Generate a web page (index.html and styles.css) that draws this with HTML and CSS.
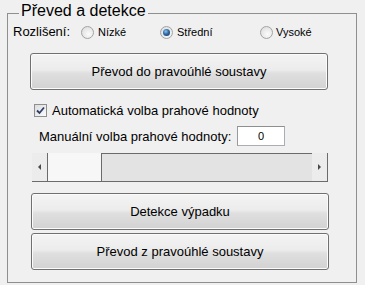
FILE: index.html
```html
<!DOCTYPE html>
<html lang="cs">
<head>
    <meta charset="UTF-8">
    <title>Převed a detekce</title>
    <link rel="stylesheet" href="styles.css">
</head>
<body>
    <div class="panel">
        <span class="panel-title">Převed a detekce</span>

        <div class="res-row">
            <span class="res-label">Rozlišení:</span>
            <label class="radio radio-low"><span class="radio-dot"></span>Nízké</label>
            <label class="radio radio-mid"><span class="radio-dot checked"></span>Střední</label>
            <label class="radio radio-high"><span class="radio-dot"></span>Vysoké</label>
        </div>

        <button class="btn btn-first">Převod do pravoúhlé soustavy</button>

        <label class="check-row">
            <span class="checkbox">
                <svg width="9" height="9" viewBox="0 0 9 9"><path d="M1 4.5 L3.5 7 L8 1.5" fill="none" stroke="#2b3f6b" stroke-width="1.8"/></svg>
            </span>
            Automatická volba prahové hodnoty
        </label>

        <div class="manual-row">
            <span class="manual-label">Manuální volba prahové hodnoty:</span>
            <span class="edit">0</span>
        </div>

        <div class="slider">
            <span class="slider-arrow left"><span class="tri-left"></span></span>
            <span class="slider-thumb"></span>
            <span class="slider-track"></span>
            <span class="slider-arrow right"><span class="tri-right"></span></span>
        </div>

        <button class="btn btn-second">Detekce výpadku</button>
        <button class="btn btn-third">Převod z pravoúhlé soustavy</button>
    </div>
</body>
</html>
```

FILE: styles.css
```css
:root {
    --bg-color: #f0f0f0;
    --frame-color: #8f8f8f;
    --dark-line: #6b6b6b;
    --text-color: #000000;
    --font-family: 'Liberation Sans', Arial, sans-serif;
}

body {
    margin: 0;
    padding: 13px 0 0 7px;
    background: var(--bg-color);
    color: var(--text-color);
    font-family: var(--font-family);
    font-size: 13px;
    width: 365px;
    height: 285px;
    box-sizing: border-box;
    overflow: hidden;
}

.panel {
    position: relative;
    width: 350px;
    height: 270px;
    border: 1px solid var(--frame-color);
    box-sizing: border-box;
    padding-top: 10px;
    display: flex;
    flex-direction: column;
    align-items: flex-start;
}

.panel-title {
    position: absolute;
    top: -12px;
    left: 11px;
    padding: 0 2px;
    background: var(--bg-color);
    font-size: 16px;
    line-height: 18px;
}

/* Fila de resolucion */
.res-row {
    display: flex;
    align-items: center;
    height: 16px;
    padding-left: 5px;
}

.res-label {
    width: 68px;
    line-height: 16px;
}

.radio {
    display: flex;
    align-items: center;
    font-size: 11px;
}

.radio-low {
    width: 79px;
}

.radio-mid {
    width: 100px;
}

.radio-dot {
    width: 13px;
    height: 13px;
    box-sizing: border-box;
    border-radius: 50%;
    border: 1px solid #a3a3a3;
    background: radial-gradient(circle at 60% 65%, #fbfbfb 0%, #e3e3e3 70%, #d4d4d4 100%);
    margin-right: 4px;
    display: flex;
    align-items: center;
    justify-content: center;
}

.radio-high .radio-dot {
    margin-right: 3px;
}

.radio-dot.checked::after {
    content: "";
    width: 7px;
    height: 7px;
    border-radius: 50%;
    background: radial-gradient(circle at 40% 35%, #8fc2ee 0%, #2f6aa6 45%, #0d2c55 100%);
}

/* Botones */
.btn {
    width: 298px;
    height: 37px;
    border: 1px solid #707070;
    border-radius: 3px;
    background: linear-gradient(#f4f4f4 0%, #ececec 45%, #dfdfdf 55%, #d2d2d2 100%);
    box-shadow: inset 0 0 0 1px #fbfbfb;
    font-family: var(--font-family);
    font-size: 13px;
    color: var(--text-color);
    padding: 0;
}

.btn-first {
    margin: 13px 0 0 22px;
}

.btn-second {
    margin: 11px 0 0 23px;
}

.btn-third {
    margin: 3px 0 0 23px;
}

/* Casilla */
.check-row {
    display: flex;
    align-items: center;
    height: 16px;
    margin: 12px 0 0 26px;
}

.checkbox {
    width: 13px;
    height: 13px;
    box-sizing: border-box;
    border: 1px solid #8e8f8f;
    background: linear-gradient(135deg, #dcdcdc, #fbfbfb);
    margin-right: 5px;
    display: flex;
    align-items: center;
    justify-content: center;
}

.manual-row {
    display: flex;
    align-items: center;
    height: 20px;
    margin: 8px 0 0 31px;
}

.manual-label {
    width: 198px;
}

.edit {
    width: 48px;
    height: 20px;
    box-sizing: border-box;
    background: #ffffff;
    border: 1px solid #abadb3;
    border-top-color: #8f8f8f;
    border-left-color: #9a9a9a;
    font-size: 11px;
    display: flex;
    align-items: center;
    justify-content: center;
}

/* Deslizador */
.slider {
    display: flex;
    width: 296px;
    height: 29px;
    margin: 7px 0 0 24px;
    border-bottom: 1px solid var(--dark-line);
    box-sizing: border-box;
}

.slider-arrow {
    width: 15px;
    background: #ececec;
    border-right: 1px solid var(--dark-line);
    display: flex;
    align-items: center;
    justify-content: center;
}

.slider-thumb {
    width: 53px;
    background: #f7f7f7;
    border-right: 1px solid var(--dark-line);
}

.slider-track {
    flex: 1;
    background: #e3e3e3;
    border-top: 1px solid var(--dark-line);
}

.tri-left {
    border-top: 3px solid transparent;
    border-bottom: 3px solid transparent;
    border-right: 3px solid #4a4a4a;
}

.tri-right {
    border-top: 3px solid transparent;
    border-bottom: 3px solid transparent;
    border-left: 3px solid #4a4a4a;
}
```
